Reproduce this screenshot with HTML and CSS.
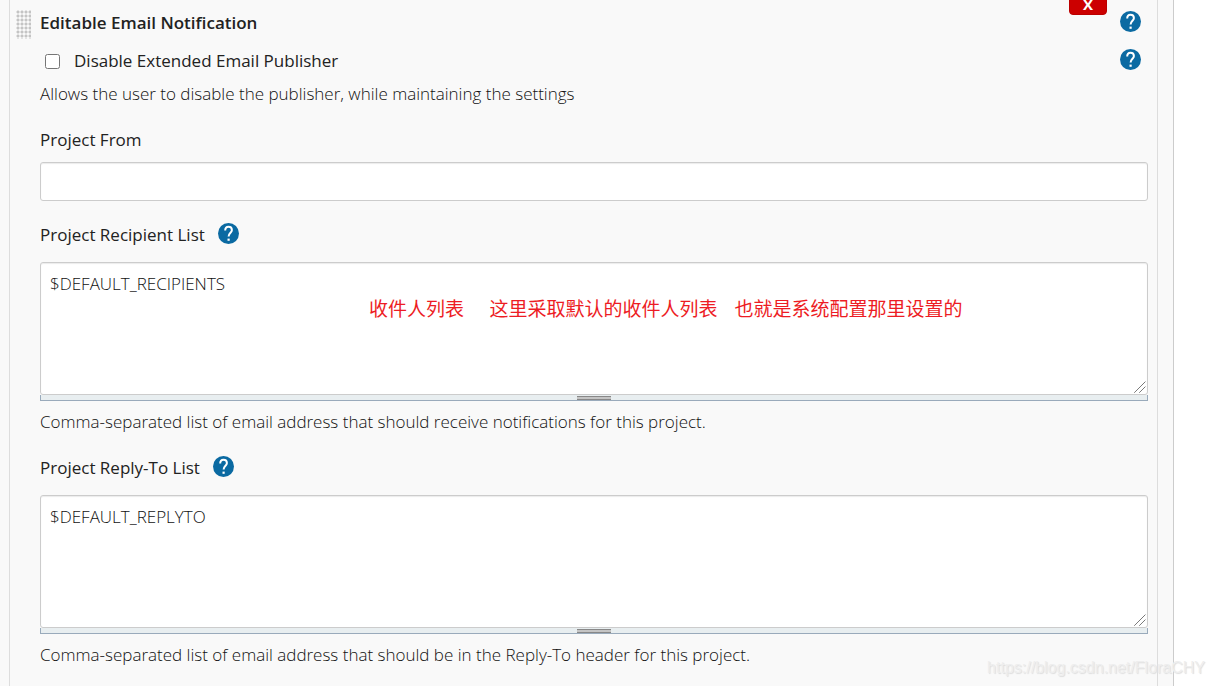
FILE: index.html
```html
<!DOCTYPE html>
<html lang="en">
<head>
  <meta charset="UTF-8">
  <meta name="viewport" content="width=device-width, initial-scale=1.0">
  <title>Editable Email Notification</title>
  <link rel="stylesheet" href="styles.css">
</head>
<body>
  <svg class="sprite" aria-hidden="true">
    <symbol id="help" viewBox="0 0 21 21">
      <circle cx="10.5" cy="10.5" r="10.5" fill="#0b6aa2"/>
      <path d="M7.2 7.4C7.2 5 8.6 3.7 10.5 3.7S13.9 5 13.9 7C13.9 9.6 10.6 10 10.6 13.6" fill="none" stroke="#fff" stroke-width="2"/>
      <rect x="9.5" y="15.6" width="2.2" height="2.2" fill="#fff"/>
    </symbol>
    <symbol id="corner" viewBox="0 0 12 12">
      <path d="M0.5 11.5L11.5 0.5M5.5 11.5L11.5 5.5" stroke="#333" stroke-width="1" stroke-dasharray="1.1 0.3"/>
    </symbol>
  </svg>

  <main class="panel">
    <section class="publisher">
      <span class="drag-handle"></span>
      <button class="delete" type="button">X</button>

      <div class="row title-row">
        <h2 class="title">Editable Email Notification</h2>
        <button class="help" type="button" aria-label="Help for Editable Email Notification"><svg><use href="#help"/></svg></button>
      </div>

      <div class="row check-row">
        <input type="checkbox" id="disable">
        <label for="disable">Disable Extended Email Publisher</label>
        <button class="help" type="button" aria-label="Help for Disable Extended Email Publisher"><svg><use href="#help"/></svg></button>
      </div>
      <p class="description">Allows the user to disable the publisher, while maintaining the settings</p>

      <div class="field">
        <div class="field-label">
          <label for="from">Project From</label>
        </div>
        <input class="text-input" type="text" id="from">
      </div>

      <div class="field">
        <div class="field-label with-help">
          <label for="recipients">Project Recipient List</label>
          <button class="help" type="button" aria-label="Help for Project Recipient List"><svg><use href="#help"/></svg></button>
        </div>
        <div class="area">
          <textarea id="recipients" spellcheck="false">$DEFAULT_RECIPIENTS</textarea>
          <svg class="corner"><use href="#corner"/></svg>
          <div class="resizer"><span class="grip"></span></div>
          <span class="note" lang="zh">收件人列表      这里采取默认的收件人列表    也就是系统配置那里设置的</span>
        </div>
        <p class="description">Comma-separated list of email address that should receive notifications for this project.</p>
      </div>

      <div class="field">
        <div class="field-label with-help">
          <label for="replyto">Project Reply-To List</label>
          <button class="help" type="button" aria-label="Help for Project Reply-To List"><svg><use href="#help"/></svg></button>
        </div>
        <div class="area">
          <textarea id="replyto" spellcheck="false">$DEFAULT_REPLYTO</textarea>
          <svg class="corner"><use href="#corner"/></svg>
          <div class="resizer"><span class="grip"></span></div>
        </div>
        <p class="description">Comma-separated list of email address that should be in the Reply-To header for this project.</p>
      </div>
    </section>
  </main>
  <div class="watermark">https://blog.csdn.net/FloraCHY</div>
</body>
</html>
```

FILE: styles.css
```css
* {
  box-sizing: border-box;
}
html, body {
  margin: 0;
  padding: 0;
  height: 100%;
  overflow: hidden;
  background-color: #fff;
  color: #222;
  font-family: "Segoe UI", "Open Sans", "Noto Sans", sans-serif;
  font-size: 17px;
  line-height: 24px;
}
.sprite {
  position: absolute;
  width: 0;
  height: 0;
}
.panel {
  min-height: 100%;
  margin-right: 41px;
  padding: 0 15px 0 9px;
  background-color: #f9f9f9;
  border-right: 1px solid #ccc;
  display: flex;
}
.publisher {
  position: relative;
  flex: 1;
  padding: 11px 9px 20px 30px;
  border-left: 1px solid #ddd;
  border-right: 1px solid #ddd;
}
.drag-handle {
  position: absolute;
  left: 6px;
  top: 10px;
  width: 15px;
  height: 29px;
  background-image: radial-gradient(circle at 2px 2px, #c4c4c4 1px, transparent 2px);
  background-size: 4px 4px;
}
.delete {
  position: absolute;
  right: 50px;
  top: -12px;
  width: 38px;
  height: 27px;
  padding: 5px 0 0;
  border: 1px solid #b00;
  border-radius: 4px;
  background-color: #c00;
  color: #fff;
  font-family: inherit;
  font-size: 15px;
  font-weight: 700;
  line-height: 20px;
}
.row {
  display: flex;
  align-items: center;
  padding-right: 7px;
}
.row .help {
  margin-left: auto;
}
.title-row {
  height: 24px;
}
.title {
  margin: 0;
  font-size: 17px;
  font-weight: 600;
}
.check-row {
  height: 24px;
  margin-top: 14px;
}
.check-row input {
  width: 15px;
  height: 15px;
  margin: 0 14px 0 5px;
}
label {
  font-weight: 500;
}
.help {
  display: block;
  align-self: flex-start;
  width: 21px;
  height: 21px;
  padding: 0;
  border: none;
  background: none;
  cursor: pointer;
}
.help svg {
  display: block;
  width: 21px;
  height: 21px;
}
.description {
  margin: 9px 0 0;
  color: #111;
  font-weight: 300;
}
.field {
  margin-top: 22px;
}
.field-label {
  display: flex;
  align-items: center;
  gap: 13px;
  height: 24px;
  margin-bottom: 10px;
}
.with-help {
  margin-bottom: 15px;
}
.text-input, textarea {
  display: block;
  width: 100%;
  border: 1px solid #ccc;
  border-radius: 3px;
  background-color: #fff;
  box-shadow: inset 0 1px 1px rgba(0, 0, 0, 0.08);
  color: #111;
  font: inherit;
  font-weight: 300;
}
.text-input {
  height: 39px;
  padding: 6px 9px;
}
textarea {
  height: 133px;
  padding: 9px;
  resize: both;
}
textarea::-webkit-resizer {
  background-color: transparent;
}
.area {
  position: relative;
}
.corner {
  position: absolute;
  right: 2px;
  top: 119px;
  width: 12px;
  height: 12px;
  pointer-events: none;
}
.resizer {
  display: flex;
  justify-content: center;
  height: 6px;
  padding-top: 1px;
  border: 1px solid #9ab;
  border-top: none;
  background-color: #e8eef0;
}
.grip {
  width: 34px;
  height: 4px;
  border-top: 1px solid #888;
  border-bottom: 1px solid #888;
  background-color: #c4c4c4;
}
.note {
  position: absolute;
  left: 329px;
  top: 34px;
  color: #ed1c24;
  font-family: "Noto Sans CJK SC", sans-serif;
  font-size: 19px;
  white-space: pre;
}
.watermark {
  position: absolute;
  right: 10px;
  bottom: 6px;
  color: #eee;
  font-family: "Liberation Sans", Arial, sans-serif;
  font-size: 16px;
  text-shadow: 1px 1px 1px #ddd;
}
```
